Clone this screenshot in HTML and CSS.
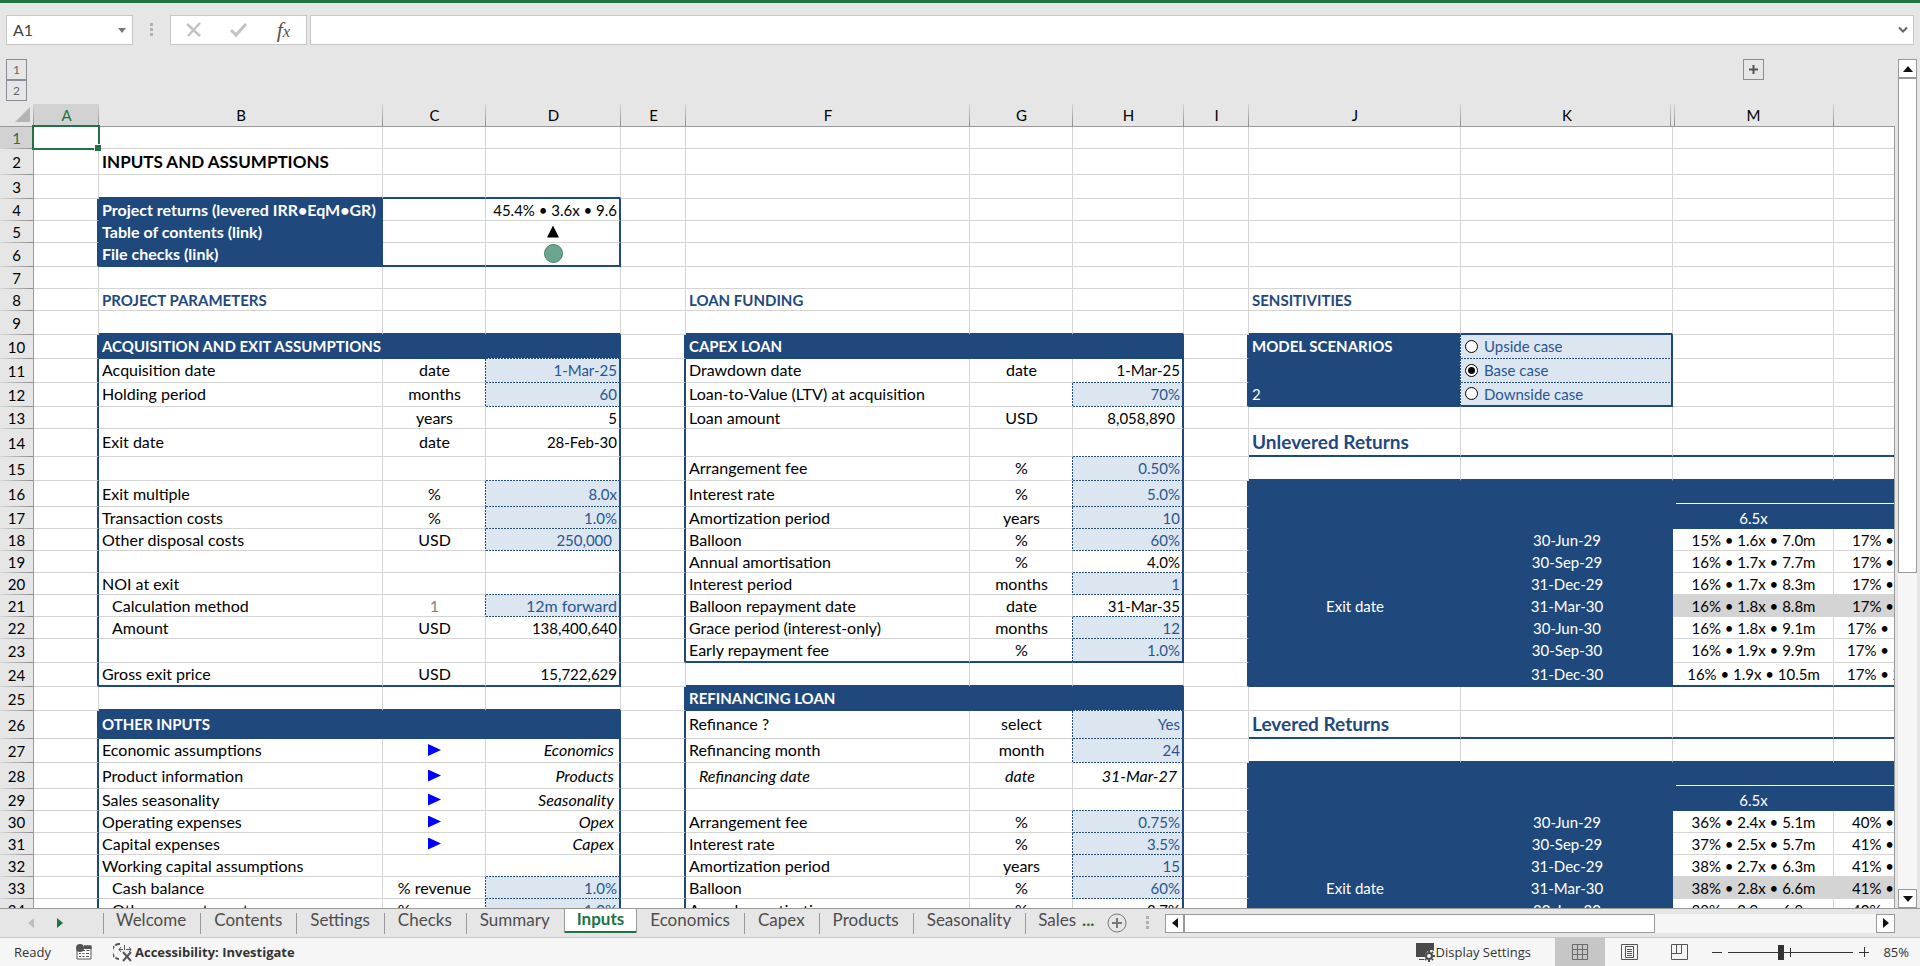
FILE: index.html
```html
<!DOCTYPE html>
<html lang="en">
<head>
<meta charset="utf-8">
<title>Inputs and assumptions</title>
<link rel="stylesheet" href="styles.css">
</head>
<body>
<header class="formula-bar">
  <div class="name-box">
    <input class="name-input" type="text" value="A1" aria-label="Name box">
    <button class="drop" aria-label="Open name list"><span class="caret"></span></button>
  </div>
  <svg class="grip" width="4" height="16" viewBox="0 0 4 16"><path d="M0 1h3v3H0zM0 6h3v3H0zM0 11h3v3H0z" fill="#b0b0b0"/></svg>
  <div class="fx-group">
    <button aria-label="Cancel"><svg width="16" height="16" viewBox="0 0 16 16"><path d="M1 2l13 12M14 1L2 14" stroke="#c3c3c3" stroke-width="2.500" fill="none"/></svg></button>
    <button aria-label="Enter"><svg width="18" height="16" viewBox="0 0 18 16"><path d="M1 8l5 5L16 2" stroke="#c3c3c3" stroke-width="3" fill="none"/></svg></button>
    <button class="fx" aria-label="Insert function">f<span class="fx-x">x</span></button>
  </div>
  <div class="formula">
    <input class="formula-input" type="text" aria-label="Formula">
    <button class="drop" aria-label="Expand formula bar"><svg width="10" height="8" viewBox="0 0 10 8"><path d="M1 1.500l4 4 4-4" stroke="#666" stroke-width="2" fill="none"/></svg></button>
  </div>
</header>

<main class="workbook">
  <div class="sheet">
    <table class="grid">
      <colgroup>
        <col class="w-num"><col class="w-gap"><col class="w-label"><col class="w-unit"><col class="w-d"><col class="w-gap"><col class="w-label"><col class="w-unit"><col class="w-h"><col class="w-gap"><col class="w-jk"><col class="w-jk"><col class="w-m"><col>
      </colgroup>
      <thead>
        <tr class="outline">
          <th><button class="level">1</button><button class="level">2</button></th>
          <th></th><th></th><th></th><th></th><th></th><th></th><th></th><th></th><th></th><th></th><th></th>
          <th><button class="expand" aria-label="Expand columns"><svg width="9" height="9" viewBox="0 0 9 9"><path d="M0 4.500h9M4.500 0v9" stroke="#555" stroke-width="2"/></svg></button></th>
          <th></th>
        </tr>
        <tr class="letters">
          <th class="corner"><svg width="16" height="16" viewBox="0 0 16 16"><path d="M15 0v15H0z" fill="#b4b4b4"/></svg></th>
          <th class="active">A</th><th>B</th><th>C</th><th>D</th><th>E</th><th>F</th><th>G</th><th>H</th><th>I</th><th>J</th><th class="before-hidden">K</th><th class="after-hidden">M</th><th class="last"></th>
        </tr>
      </thead>
      <tbody>
        <tr><th class="active">1</th><td class="cursor"></td><td></td><td></td><td></td><td></td><td></td><td></td><td></td><td></td><td></td><td></td><td></td><td></td></tr>
        <tr class="h26"><th>2</th><td></td><td class="title">INPUTS AND ASSUMPTIONS</td><td></td><td></td><td></td><td></td><td></td><td></td><td></td><td></td><td></td><td></td><td></td></tr>
        <tr class="h24"><th>3</th><td></td><td class="nb"></td><td class="nb"></td><td class="nb"></td><td></td><td></td><td></td><td></td><td></td><td></td><td></td><td></td><td></td></tr>
        <tr class="left-block"><th>4</th><td></td><td class="hd">Project returns (levered IRR•EqM•GR)</td><td></td><td>45.4% • 3.6x • 9.6</td><td></td><td></td><td></td><td></td><td></td><td></td><td></td><td></td><td></td></tr>
        <tr class="left-block"><th>5</th><td></td><td class="hd">Table of contents (link)</td><td></td><td class="mid"><a class="up" href="#contents" aria-label="Table of contents"></a></td><td></td><td></td><td></td><td></td><td></td><td></td><td></td><td></td><td></td></tr>
        <tr class="h24 left-block"><th>6</th><td></td><td class="hd nb">File checks (link)</td><td class="nb"></td><td class="mid nb"><a class="ok" href="#checks" aria-label="File checks"></a></td><td></td><td></td><td></td><td></td><td></td><td></td><td></td><td></td><td></td></tr>
        <tr><th>7</th><td></td><td></td><td></td><td></td><td></td><td></td><td></td><td></td><td></td><td></td><td></td><td></td><td></td></tr>
        <tr><th>8</th><td></td><td class="section">PROJECT PARAMETERS</td><td></td><td></td><td></td><td class="section">LOAN FUNDING</td><td></td><td></td><td></td><td class="section">SENSITIVITIES</td><td></td><td></td><td></td></tr>
        <tr class="h24"><th>9</th><td></td><td class="nb"></td><td class="nb"></td><td class="nb"></td><td></td><td class="nb"></td><td class="nb"></td><td class="nb"></td><td></td><td class="nb"></td><td class="nb"></td><td></td><td></td></tr>
        <tr class="h24 left-block mid-block scenario"><th>10</th><td></td><td class="hd caps">ACQUISITION AND EXIT ASSUMPTIONS</td><td class="hd"></td><td class="hd db"></td><td></td><td class="hd caps">CAPEX LOAN</td><td class="hd"></td><td class="hd"></td><td></td><td class="hd dr">MODEL SCENARIOS</td><td class="in"><label class="option"><input type="radio" name="scenario">Upside case</label></td><td></td><td></td></tr>
        <tr class="h24 left-block mid-block scenario"><th>11</th><td></td><td>Acquisition date</td><td class="dr">date</td><td class="in">1-Mar-25</td><td></td><td>Drawdown date</td><td>date</td><td class="db">1-Mar-25</td><td></td><td class="hd dr"></td><td class="in"><label class="option"><input type="radio" name="scenario" checked>Base case</label></td><td></td><td></td></tr>
        <tr class="h24 left-block mid-block scenario"><th>12</th><td></td><td>Holding period</td><td class="dr">months</td><td class="in">60</td><td></td><td>Loan-to-Value (LTV) at acquisition</td><td class="dr"></td><td class="in">70%</td><td></td><td class="hd dr plain">2</td><td class="in nb"><label class="option"><input type="radio" name="scenario">Downside case</label></td><td></td><td></td></tr>
        <tr class="left-block mid-block"><th>13</th><td></td><td></td><td>years</td><td>5</td><td></td><td>Loan amount</td><td>USD</td><td class="acct">8,058,890</td><td></td><td></td><td></td><td></td><td></td></tr>
        <tr class="h28 left-block mid-block"><th>14</th><td></td><td>Exit date</td><td>date</td><td>28-Feb-30</td><td></td><td></td><td></td><td class="db"></td><td></td><td class="subtitle nb">Unlevered Returns</td><td class="nb"></td><td class="nb"></td><td class="nb"></td></tr>
        <tr class="h24 left-block mid-block"><th>15</th><td></td><td></td><td></td><td class="db"></td><td></td><td>Arrangement fee</td><td class="dr">%</td><td class="in">0.50%</td><td></td><td class="nb"></td><td class="nb"></td><td class="nb"></td><td class="nb"></td></tr>
        <tr class="h26 left-block mid-block returns"><th>16</th><td></td><td>Exit multiple</td><td class="dr">%</td><td class="in">8.0x</td><td></td><td>Interest rate</td><td class="dr">%</td><td class="in">5.0%</td><td></td><td></td><td></td><td class="hd rule first"></td><td class="hd rule"></td></tr>
        <tr class="left-block mid-block returns"><th>17</th><td></td><td>Transaction costs</td><td class="dr">%</td><td class="in">1.0%</td><td></td><td>Amortization period</td><td class="dr">years</td><td class="in">10</td><td></td><td></td><td></td><td class="hd plain">6.5x</td><td class="hd"></td></tr>
        <tr class="left-block mid-block returns"><th>18</th><td></td><td>Other disposal costs</td><td class="dr">USD</td><td class="in acct">250,000</td><td></td><td>Balloon</td><td class="dr">%</td><td class="in">60%</td><td></td><td></td><td>30-Jun-29</td><td>15% • 1.6x • 7.0m</td><td>17% •</td></tr>
        <tr class="left-block mid-block returns"><th>19</th><td></td><td></td><td></td><td></td><td></td><td>Annual amortisation</td><td>%</td><td class="db">4.0%</td><td></td><td></td><td>30-Sep-29</td><td>16% • 1.7x • 7.7m</td><td>17% •</td></tr>
        <tr class="left-block mid-block returns"><th>20</th><td></td><td>NOI at exit</td><td></td><td class="db"></td><td></td><td>Interest period</td><td class="dr">months</td><td class="in">1</td><td></td><td></td><td>31-Dec-29</td><td>16% • 1.7x • 8.3m</td><td>17% •</td></tr>
        <tr class="left-block mid-block returns"><th>21</th><td></td><td class="indent">Calculation method</td><td class="dr dim">1</td><td class="in pick">12m forward</td><td></td><td>Balloon repayment date</td><td>date</td><td class="db">31-Mar-35</td><td></td><td class="mid">Exit date</td><td>31-Mar-30</td><td class="base">16% • 1.8x • 8.8m</td><td class="base">17% •</td></tr>
        <tr class="left-block mid-block returns"><th>22</th><td></td><td class="indent">Amount</td><td>USD</td><td>138,400,640</td><td></td><td>Grace period (interest-only)</td><td class="dr">months</td><td class="in">12</td><td></td><td></td><td>30-Jun-30</td><td>16% • 1.8x • 9.1m</td><td class="long">17% • 1</td></tr>
        <tr class="h24 left-block mid-block returns"><th>23</th><td></td><td></td><td></td><td></td><td></td><td class="nb">Early repayment fee</td><td class="dr nb">%</td><td class="in nb">1.0%</td><td></td><td></td><td>30-Sep-30</td><td>16% • 1.9x • 9.9m</td><td class="long">17% • 1</td></tr>
        <tr class="h24 left-block returns"><th>24</th><td></td><td class="nb">Gross exit price</td><td class="nb">USD</td><td class="nb">15,722,629</td><td></td><td class="nb"></td><td class="nb"></td><td class="nb"></td><td></td><td></td><td>31-Dec-30</td><td class="nb">16% • 1.9x • 10.5m</td><td class="nb long">17% • 2</td></tr>
        <tr class="h24 mid-block"><th>25</th><td></td><td class="nb"></td><td class="nb"></td><td class="nb"></td><td></td><td class="hd caps">REFINANCING LOAN</td><td class="hd"></td><td class="hd db"></td><td></td><td></td><td></td><td></td><td></td></tr>
        <tr class="h28 left-block mid-block"><th>26</th><td></td><td class="hd caps">OTHER INPUTS</td><td class="hd"></td><td class="hd"></td><td></td><td>Refinance ?</td><td class="dr">select</td><td class="in">Yes</td><td></td><td class="subtitle nb">Levered Returns</td><td class="nb"></td><td class="nb"></td><td class="nb"></td></tr>
        <tr class="h24 left-block mid-block"><th>27</th><td></td><td>Economic assumptions</td><td><a class="go" href="#economics" aria-label="Go to Economics"></a></td><td class="note">Economics</td><td></td><td>Refinancing month</td><td class="dr">month</td><td class="in">24</td><td></td><td class="nb"></td><td class="nb"></td><td class="nb"></td><td class="nb"></td></tr>
        <tr class="h26 left-block mid-block returns"><th>28</th><td></td><td>Product information</td><td><a class="go" href="#products" aria-label="Go to Products"></a></td><td class="note">Products</td><td></td><td class="indent note">Refinancing date</td><td class="note">date</td><td class="note">31-Mar-27</td><td></td><td></td><td></td><td class="hd rule first"></td><td class="hd rule"></td></tr>
        <tr class="left-block mid-block returns"><th>29</th><td></td><td>Sales seasonality</td><td><a class="go" href="#seasonality" aria-label="Go to Seasonality"></a></td><td class="note">Seasonality</td><td></td><td></td><td></td><td class="db"></td><td></td><td></td><td></td><td class="hd plain">6.5x</td><td class="hd"></td></tr>
        <tr class="left-block mid-block returns"><th>30</th><td></td><td>Operating expenses</td><td><a class="go" href="#opex" aria-label="Go to Opex"></a></td><td class="note">Opex</td><td></td><td>Arrangement fee</td><td class="dr">%</td><td class="in">0.75%</td><td></td><td></td><td>30-Jun-29</td><td>36% • 2.4x • 5.1m</td><td>40% •</td></tr>
        <tr class="left-block mid-block returns"><th>31</th><td></td><td>Capital expenses</td><td><a class="go" href="#capex" aria-label="Go to Capex"></a></td><td class="note">Capex</td><td></td><td>Interest rate</td><td class="dr">%</td><td class="in">3.5%</td><td></td><td></td><td>30-Sep-29</td><td>37% • 2.5x • 5.7m</td><td>41% •</td></tr>
        <tr class="left-block mid-block returns"><th>32</th><td></td><td>Working capital assumptions</td><td></td><td class="db"></td><td></td><td>Amortization period</td><td class="dr">years</td><td class="in">15</td><td></td><td></td><td>31-Dec-29</td><td>38% • 2.7x • 6.3m</td><td>41% •</td></tr>
        <tr class="left-block mid-block returns"><th>33</th><td></td><td class="indent">Cash balance</td><td class="dr">% revenue</td><td class="in">1.0%</td><td></td><td>Balloon</td><td class="dr">%</td><td class="in">60%</td><td></td><td class="mid">Exit date</td><td>31-Mar-30</td><td class="base">38% • 2.8x • 6.6m</td><td class="base">41% •</td></tr>
        <tr class="left-block mid-block returns"><th>34</th><td></td><td class="indent">Other current assets</td><td class="dr">% revenue</td><td class="in">1.0%</td><td></td><td>Annual amortisation</td><td>%</td><td>3.7%</td><td></td><td></td><td>30-Jun-30</td><td>38% • 2.9x • 6.9m</td><td>40% •</td></tr>
      </tbody>
    </table>
  </div>
  <div class="sheet-edge"></div>
  <div class="scroll-y">
    <button class="arrow" aria-label="Scroll up"><svg width="10" height="6" viewBox="0 0 10 6"><path d="M5 0l5 6H0z" fill="#111"/></svg></button>
    <div class="thumb-y"></div>
    <div class="rest"></div>
    <button class="arrow" aria-label="Scroll down"><svg width="10" height="6" viewBox="0 0 10 6"><path d="M5 6l5-6H0z" fill="#111"/></svg></button>
  </div>
</main>

<nav class="tabs">
  <div class="tab-nav">
    <button aria-label="Previous sheets"><svg width="6" height="10" viewBox="0 0 6 10"><path d="M6 0v10L0 5z" fill="#bdbdbd"/></svg></button>
    <button aria-label="Next sheets"><svg width="6" height="10" viewBox="0 0 6 10"><path d="M0 0v10l6-5z" fill="#217346"/></svg></button>
  </div>
  <button class="tab">Welcome</button>
  <button class="tab">Contents</button>
  <button class="tab">Settings</button>
  <button class="tab">Checks</button>
  <button class="tab no-line">Summary</button>
  <button class="tab current">Inputs</button>
  <button class="tab">Economics</button>
  <button class="tab">Capex</button>
  <button class="tab">Products</button>
  <button class="tab">Seasonality</button>
  <button class="tab last-tab">Sales <b class="more">...</b></button>
  <button class="add" aria-label="New sheet"><svg width="20" height="20" viewBox="0 0 20 20"><circle cx="10" cy="10" r="9" fill="none" stroke="#777"/><path d="M5 10h10M10 5v10" stroke="#777" stroke-width="2"/></svg></button>
  <svg class="grip" width="4" height="16" viewBox="0 0 4 16"><path d="M0 1h3v3H0zM0 6h3v3H0zM0 11h3v3H0z" fill="#b0b0b0"/></svg>
  <div class="scroll-x">
    <button class="arrow" aria-label="Scroll left"><svg width="6" height="10" viewBox="0 0 6 10"><path d="M6 0v10L0 5z" fill="#111"/></svg></button>
    <div class="thumb-x"></div>
    <div class="rest"></div>
    <button class="arrow" aria-label="Scroll right"><svg width="6" height="10" viewBox="0 0 6 10"><path d="M0 0v10l6-5z" fill="#111"/></svg></button>
  </div>
</nav>

<footer class="status">
  <span class="ready">Ready</span>
  <button class="macro" aria-label="Record macro"><svg width="16" height="16" viewBox="0 0 16 16"><path d="M1 6v9h14V2H8" fill="#fff" stroke="#555"/><path d="M8 1.500h7.500V5H8z" fill="#555"/><circle cx="4" cy="4" r="4" fill="#555"/><path d="M3 9.500h2m1.500 0h2m1.500 0h3M3 12.500h2m1.500 0h2m1.500 0h3M7 6.500h2m1.500 0h3" stroke="#555"/></svg></button>
  <button class="access"><svg width="20" height="20" viewBox="0 0 20 20"><path d="M7 2A7.500 7.500 0 0 0 6 17" fill="none" stroke="#555" stroke-width="2" stroke-dasharray="5 1.500"/><path d="M6 7.500h4m3 0h5M8 5L6 7.500 8 10M16 5l2 2.500-2 2.500M11.500 3v5" fill="none" stroke="#555"/><path d="M10 10l8 9M18 10l-8 9" stroke="#555" stroke-width="2"/></svg>Accessibility: Investigate</button>
  <button class="display"><svg width="20" height="20" viewBox="0 0 20 20"><path d="M1 1h18v8a6 6 0 0 0-9 6H1zM4 17h5v1H4z" fill="#4a4a4a"/><circle cx="14" cy="14" r="3" fill="none" stroke="#4a4a4a" stroke-width="2"/><path d="M14 8v2m0 8v2M8 14h2m8 0h2M10 10l1 1m6 6l1 1M18 10l-1 1m-6 6l-1 1" stroke="#4a4a4a" stroke-width="2"/></svg>Display Settings</button>
  <div class="views">
    <button class="view on" aria-label="Normal view"><svg width="18" height="18" viewBox="0 0 18 18"><path d="M1.500 1.500h15v15h-15zM6.500 1v16M11.500 1v16M1 6.500h16M1 11.500h16" fill="none" stroke="#6a6a6a"/></svg></button>
    <button class="view" aria-label="Page layout view"><svg width="18" height="18" viewBox="0 0 18 18"><path d="M.5 1.500h16v15H.5zM4.500 3.500h8v11h-8zM6 6.500h5M6 8.500h5M6 10.500h5M6 12.500h5" fill="none" stroke="#555"/></svg></button>
    <button class="view" aria-label="Page break view"><svg width="18" height="18" viewBox="0 0 18 18"><path d="M.5 1.500h16v15H.5zM.5 10.500h10V1.500M5.500 1v9" fill="none" stroke="#555"/></svg></button>
  </div>
  <button class="step" aria-label="Zoom out"><svg width="10" height="10" viewBox="0 0 10 10"><path d="M0 5.500h10" stroke="#333"/></svg></button>
  <input class="zoom" type="range" min="10" max="190" value="85" aria-label="Zoom">
  <button class="step" aria-label="Zoom in"><svg width="10" height="10" viewBox="0 0 10 10"><path d="M0 5.500h10M5.500 0v10" stroke="#333"/></svg></button>
  <span class="percent">85%</span>
</footer>
</body>
</html>
```

FILE: styles.css
```css
:root {
  --navy: #1f497d;
  --green: #217346;
  --chrome: #e6e6e6;
  --line: #d4d4d4;
  --edge: #999;
  --input: #dce6f1;
  --dots-x: repeating-linear-gradient(90deg, var(--navy) 0 2px, #fff 2px 3px);
  --dots-y: repeating-linear-gradient(180deg, var(--navy) 0 2px, #fff 2px 3px);
}

* { box-sizing: border-box; }

body {
  margin: 0;
  height: 100vh;
  display: flex;
  flex-direction: column;
  overflow: hidden;
  background: var(--chrome);
  border-top: 3px solid var(--green);
  font: 15px/18px Lato, "Open Sans", sans-serif;
  color: #000;
}

button, input { font: inherit; color: inherit; }
button { border: 0; padding: 0; background: none; display: flex; align-items: center; justify-content: center; }
svg { display: block; flex: none; }

/* Formula bar */
.formula-bar { display: flex; align-items: center; padding: 12px 6px 0; height: 42px; }
.name-box, .fx-group, .formula { display: flex; height: 30px; background: #fff; border: 1px solid #c6c6c6; }
.name-box { width: 127px; color: #444; }
.name-input, .formula-input { flex: 1; min-width: 0; border: 0; outline: 0; padding: 0 6px; background: none; }
.name-input { font-size: 16px; }
.drop { width: 20px; }
.caret { width: 0; border: 4px solid transparent; border-top: 5px solid #777; border-bottom: 0; }
.formula-bar .grip { margin: 0 16px 0 17px; }
.fx-group { width: 137px; margin-right: 3px; }
.fx-group button { flex: 1; }
.fx-group .fx { font: italic 22px/24px "Liberation Serif", serif; color: #555; }
.fx-x { font-size: 17px; padding-top: 4px; }
.formula { flex: 1; }

/* Sheet */
.workbook { flex: 1; min-height: 0; display: flex; }
.sheet { flex: 1; min-width: 0; overflow: hidden; }
.sheet-edge { width: 1px; margin-top: 81px; background: var(--edge); }
.grid { width: 100%; table-layout: fixed; border-collapse: separate; border-spacing: 0; }
.w-num { width: 34px; }
.w-gap { width: 65px; }
.w-label { width: 284px; }
.w-unit { width: 103px; }
.w-d { width: 135px; }
.w-h { width: 111px; }
.w-jk { width: 212px; }
.w-m { width: 161px; }

th { padding: 0; font-weight: 400; text-align: center; background: var(--chrome) no-repeat; }
.outline { height: 59px; }
.outline th { vertical-align: top; padding-top: 14px; }
.level, .expand { height: 21px; border: 1px solid #8a8a99; color: #666; font-size: 12px; }
.level { width: 21px; margin-left: 6px; }
.expand { width: 21px; margin: 0 auto; }
.letters { height: 23px; }
.letters th {
  border-bottom: 1px solid var(--edge);
  background-image: linear-gradient(#d6d6d6, #8c8c8c);
  background-size: 1px 100%;
  background-position: right top;
}
.letters .before-hidden { background-position: right 2px top; }
.letters .after-hidden {
  background-image: linear-gradient(#d6d6d6, #8c8c8c), linear-gradient(#d6d6d6, #8c8c8c);
  background-position: 1px 0, right top;
}
.letters .last { background-image: none; }
.corner svg { margin: 0 0 0 15px; }
th.active { background-color: #d2d2d2; color: var(--green); }

tbody tr { height: 22px; }
tbody .h24 { height: 24px; }
tbody .h26 { height: 26px; }
tbody .h28 { height: 28px; }
tbody th {
  border-right: 1px solid var(--edge);
  background-image: linear-gradient(90deg, #d6d6d6, #8c8c8c);
  background-size: 100% 1px;
  background-position: left bottom;
}

td {
  padding: 0 2px 0 3px;
  border-right: 1px solid var(--line);
  border-bottom: 1px solid var(--line);
  white-space: nowrap;
  overflow: hidden;
  background-color: #fff;
  background-origin: border-box;
  background-repeat: no-repeat;
  background-image: var(--bottom, none), var(--right, none);
  background-size: 100% 1px, 1px 100%;
  background-position: left bottom, right top;
}
.h24 td, .h28 td { padding-bottom: 1px; }
td:nth-child(3), td:nth-child(4), td:nth-child(7), td:nth-child(8), .grid .pick { font-size: 16px; }
td:nth-child(4), td:nth-child(8), td:nth-child(12), td:nth-child(13), .grid .mid { text-align: center; }
td:nth-child(5), td:nth-child(9) { text-align: right; }
td:nth-child(14) { border-right: 0; padding-left: 18px; }

.title, .subtitle, .section { font-weight: 700; }
.grid .title { font-size: 17px; }
.grid .section, .grid .caps { font-size: 15px; }
.grid .subtitle { font-size: 19px; }
.section, .subtitle { color: var(--navy); }
.indent { padding-left: 13px; }
.note { font-style: italic; font-size: 16px; padding-right: 5px; }
.dim { color: #808080; }
.acct { padding-right: 7px; }

.hd { background-color: var(--navy); border-color: var(--navy); color: #fff; font-weight: 700; }
.plain { font-weight: 400; }
.in { background-color: var(--input); color: #2a5690; }
.in, .db { --bottom: var(--dots-x); border-bottom-color: transparent; }
.dr { --right: var(--dots-y); border-right-color: transparent; }
.nb { --bottom: none; border-bottom: 2px solid var(--navy); }

.left-block td:nth-child(2), .left-block td:nth-child(5),
.mid-block td:nth-child(6), .mid-block td:nth-child(9),
.scenario td:nth-child(10), .scenario td:nth-child(12),
.returns td:nth-child(10) { border-right: 2px solid var(--navy); }
.returns td:nth-child(11), .returns td:nth-child(12) { background-color: var(--navy); border-color: var(--navy); color: #fff; }
.grid .base { background-color: #d4d4d4; border-color: #d4d4d4; }
.grid .long { padding-left: 13px; }
.rule { background-image: linear-gradient(#fff, #fff); background-size: 100% 1px; background-position: 0 22px; }
.rule.first { border-right: 0; background-position: 3px 22px; }

.scenario td:nth-child(12) { text-align: left; }
.option { display: flex; align-items: center; gap: 6px; padding-left: 1px; }
.option input {
  appearance: none;
  width: 13px;
  height: 13px;
  margin: 0;
  border: 1px solid #000;
  border-radius: 50%;
  background: #fff;
}
.option input:checked { background: radial-gradient(circle, #000 0 3px, #fff 4px); }

.up, .go, .ok { display: block; margin: 0 auto; }
.up { width: 12px; height: 12px; background: #000; clip-path: polygon(50% 0, 100% 100%, 0 100%); }
.go { width: 13px; height: 12px; background: #00f; clip-path: polygon(0 0, 100% 50%, 0 100%); }
.ok { width: 19px; height: 19px; border: 1px solid #45806c; border-radius: 50%; background: #69a58f; }

.grid .cursor { position: relative; overflow: visible; }
.cursor::before { content: ""; position: absolute; inset: -2px; border: 2px solid var(--green); }
.cursor::after { content: ""; position: absolute; right: -3px; bottom: -3px; width: 6px; height: 6px; background: var(--green); border: solid #fff; border-width: 1px 0 0 1px; }

/* Scroll bars */
.arrow { width: 19px; height: 19px; flex: none; background: #fff; border: 1px solid var(--edge); }
.rest { flex: 1; background: #f6f6f6; }
.scroll-y { display: flex; flex-direction: column; width: 19px; margin: 14px 3px 0 3px; }
.thumb-y { flex: 61 0 0; background: #fff; border: 1px solid var(--edge); }
.scroll-y .rest { flex: 39 0 0; }
.scroll-x { flex: 1; display: flex; height: 19px; margin-right: 25px; }
.thumb-x { flex: 68 0 0; background: #fff; border: 1px solid var(--edge); }
.scroll-x .rest { flex: 32 0 0; }

/* Sheet tabs */
.tabs { display: flex; align-items: center; height: 29px; border-top: 1px solid var(--edge); font-size: 17px; color: #4d4d4d; }
.tab-nav { display: flex; gap: 23px; width: 103px; padding-left: 28px; }
.tab { height: 21px; padding: 0 14px 6px 13px; border-right: 1px solid var(--edge); white-space: nowrap; }
.tab-nav + .tab { border-left: 1px solid var(--edge); padding-left: 12px; }
.tab.no-line { border-right: 0; }
.tab.current { align-self: stretch; height: auto; margin-bottom: 4px; padding: 0 12px 4px; background: #fff; border: solid var(--edge); border-width: 0 1px; box-shadow: inset 0 -2px var(--green); color: var(--green); font-weight: 700; }
.tab.last-tab { border-right: 0; padding-left: 12px; padding-right: 13px; }
.more { color: var(--green); margin-left: 6px; }
.add { margin-right: 19px; }
.tabs .grip { margin-right: 15px; }

/* Status bar */
.status { display: flex; align-items: center; height: 29px; padding: 0 11px 0 14px; background: #f6f6f6; border-top: 1px solid #c6c6c6; font: 13px/18px "Open Sans", "Noto Sans", sans-serif; color: #333; }
.macro { margin-left: 25px; }
.access { margin-left: 21px; gap: 2px; font-weight: 700; }
.display { margin-left: auto; gap: 1px; }
.views { display: flex; align-self: stretch; margin: 0 7px 0 24px; }
.view { width: 50px; }
.view.on { background: #c6c6c6; }
.zoom {
  appearance: none;
  width: 125px;
  height: 15px;
  margin: 0 6px;
  background: linear-gradient(#333, #333) 0 7px / 100% 1px no-repeat, linear-gradient(#333, #333) 50% 50% / 1px 9px no-repeat;
}
.zoom::-webkit-slider-thumb { appearance: none; width: 6px; height: 15px; background: #333; }
.percent { width: 40px; text-align: right; }
```
